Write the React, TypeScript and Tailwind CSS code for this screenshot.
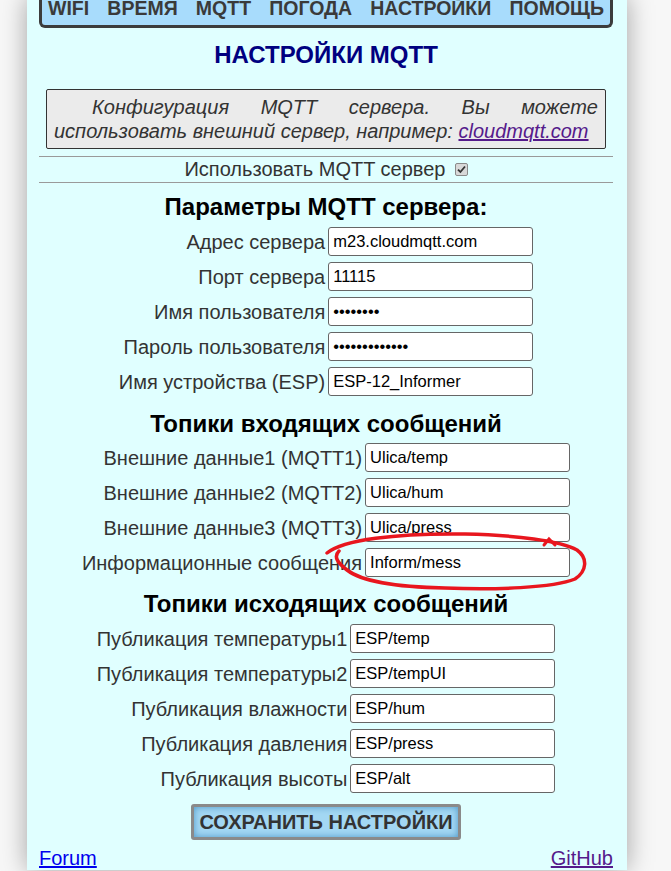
import React from 'react';

type Field = { label: string; value: string; type?: string; mark?: boolean };

const serverFields: Field[] = [
  { label: 'Адрес сервера', value: 'm23.cloudmqtt.com' },
  { label: 'Порт сервера', value: '11115' },
  { label: 'Имя пользователя', value: 'abcdefgh', type: 'password' },
  { label: 'Пароль пользователя', value: 'abcdefghijklm', type: 'password' },
  { label: 'Имя устройства (ESP)', value: 'ESP-12_Informer' },
];

const inTopics: Field[] = [
  { label: 'Внешние данные1 (MQTT1)', value: 'Ulica/temp' },
  { label: 'Внешние данные2 (MQTT2)', value: 'Ulica/hum' },
  { label: 'Внешние данные3 (MQTT3)', value: 'Ulica/press' },
  { label: 'Информационные сообщения', value: 'Inform/mess', mark: true },
];

const outTopics: Field[] = [
  { label: 'Публикация температуры1', value: 'ESP/temp' },
  { label: 'Публикация температуры2', value: 'ESP/tempUI' },
  { label: 'Публикация влажности', value: 'ESP/hum' },
  { label: 'Публикация давления', value: 'ESP/press' },
  { label: 'Публикация высоты', value: 'ESP/alt' },
];

const navItems = ['WIFI', 'ВРЕМЯ', 'MQTT', 'ПОГОДА', 'НАСТРОЙКИ', 'ПОМОЩЬ'];

// hand-drawn red loop around a field
const RedLoop = () => (
  <svg
    className="pointer-events-none absolute -left-[40px] -top-[18px]"
    width="266"
    height="64"
    viewBox="0 0 266 64"
    fill="none"
  >
    <path
      d="M2 23 C18 10 70 3 140 4 C190 5 236 11 252 20 C263 28 262 41 250 49 C228 58 170 60 120 58 C72 57 36 51 22 40 C13 33 8 27 14 21"
      stroke="#e8161e"
      strokeWidth="3.5"
      strokeLinecap="round"
    />
    <path d="M219 15 L224 9 L230 15" stroke="#e8161e" strokeWidth="3" strokeLinecap="round" />
  </svg>
);

const FieldTable = ({ rows }: { rows: Field[] }) => (
  <div className="mx-auto grid w-fit grid-cols-[auto_205px] items-center gap-x-[3px] gap-y-[6px]">
    {rows.map((r) => (
      <React.Fragment key={r.label}>
        <label className="whitespace-nowrap text-right text-[20px] leading-[24px] text-[#333]">{r.label}</label>
        <div className="relative">
          <input
            readOnly
            type={r.type ?? 'text'}
            value={r.value}
            className="block h-[29px] w-[205px] rounded-[3px] border border-[#666] bg-white px-[4px] text-[16.5px] text-black outline-none"
          />
          {r.mark && <RedLoop />}
        </div>
      </React.Fragment>
    ))}
  </div>
);

export default function App() {
  return (
    <div className="h-[871px] overflow-hidden bg-[#f7f7f7] font-['Liberation_Sans',Arial,sans-serif]">
      <div className="ml-[27px] min-h-full w-[600px] bg-[#e0ffff] pl-[12px] pr-[14px] shadow-[0_0_24px_rgba(0,0,0,0.35)]">
        {/* top menu */}
        <div className="h-[31px] rounded-b-[6px] border-x-[3px] border-b-[3px] border-[#3c3c3c] bg-[#a8dcfc]">
          <div className="-mt-[3px] flex justify-between px-[6px] text-[19.5px] font-bold leading-[22px] text-[#3a3a3a]">
            {navItems.map((n) => (
              <span key={n}>{n}</span>
            ))}
          </div>
        </div>

        <h2 className="mt-[14px] text-center text-[24px] font-bold leading-[26px] text-[#000080]">НАСТРОЙКИ MQTT</h2>

        <div className="mx-[7px] mt-[21px] rounded-[2px] border border-[#333] bg-[#ebebeb] px-[7px] py-[5px] text-[20px] italic leading-[24px] text-[#333]">
          <p className="indent-[38px] text-justify [text-align-last:justify]">Конфигурация MQTT сервера. Вы можете</p>
          <p>
            использовать внешний сервер, например:{' '}
            <a href="#" className="text-[#551a8b] underline">
              cloudmqtt.com
            </a>
          </p>
        </div>

        <div className="mt-[7px] border-t border-[#9a9a9a]" />
        <div className="flex h-[25px] items-center justify-center gap-[9px] text-[20px] leading-[25px] text-[#333]">
          <span>Использовать MQTT сервер</span>
          <span className="flex h-[13px] w-[13px] items-center justify-center rounded-[2px] border border-[#8a8a8a] bg-[#d8d8d8]">
            <svg width="9" height="9" viewBox="0 0 9 9">
              <path d="M1 4.6 L3.4 7 L8 1.5" stroke="#333" strokeWidth="1.8" fill="none" />
            </svg>
          </span>
        </div>
        <div className="border-t border-[#9a9a9a]" />

        <h3 className="mt-[11px] text-center text-[24px] font-bold leading-[26px] text-black">Параметры MQTT сервера:</h3>
        <div className="mt-[7px]">
          <FieldTable rows={serverFields} />
        </div>

        <h3 className="mt-[15px] text-center text-[24px] font-bold leading-[26px] text-black">Топики входящих сообщений</h3>
        <div className="mt-[6px]">
          <FieldTable rows={inTopics} />
        </div>

        <h3 className="mt-[14px] text-center text-[24px] font-bold leading-[26px] text-black">Топики исходящих сообщений</h3>
        <div className="mt-[7px]">
          <FieldTable rows={outTopics} />
        </div>

        <div className="mt-[11px] flex justify-center">
          <button className="h-[36px] w-[270px] rounded-[3px] border-[3px] border-[#8a8a8a] bg-[#a3d7f3] text-[20px] font-bold text-[#333] shadow-[inset_0_0_7px_#4f97c6]">
            СОХРАНИТЬ НАСТРОЙКИ
          </button>
        </div>

        <div className="mt-[6px] flex justify-between text-[20px] leading-[24px]">
          <a href="#" className="text-[#0000ee] underline">
            Forum
          </a>
          <a href="#" className="text-[#551a8b] underline">
            GitHub
          </a>
        </div>
      </div>
    </div>
  );
}
